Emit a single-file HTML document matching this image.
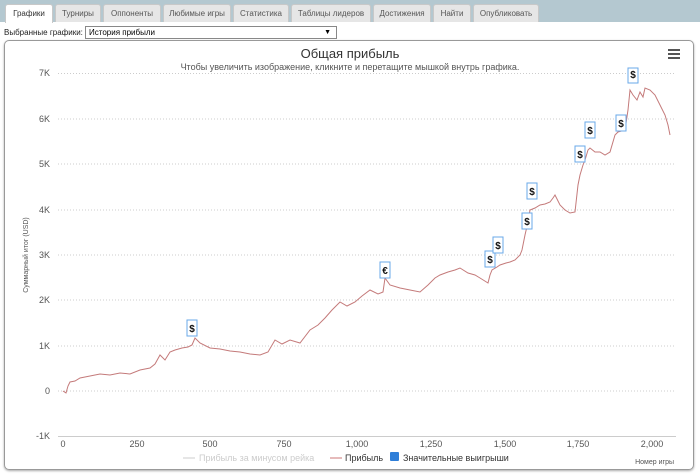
<!DOCTYPE html>
<html><head><meta charset="utf-8"><style>
body{margin:0;width:700px;height:474px;background:#fff;font-family:"Liberation Sans","DejaVu Sans",sans-serif;position:relative;overflow:hidden}
.bar{position:absolute;left:0;top:0;width:700px;height:22px;background:#b4c8d0}
.tab{position:absolute;top:4px;height:18px;background:#e6e6e6;border:1px solid #c8c8c8;border-bottom:none;border-radius:3px 3px 0 0;font-size:8px;color:#555;line-height:17px;text-align:center;box-sizing:border-box}
.tab.a{background:#fff;height:19px;color:#333}
.lbl{position:absolute;left:4px;top:28px;font-size:8px;color:#222}
.sel{position:absolute;left:85px;top:26px;width:247px;height:11px;border:1px solid #888;font-size:8px;line-height:11px;padding-left:3px;box-sizing:content-box}
.sel span{position:absolute;right:5px;top:0;font-size:7px}
.box{position:absolute;left:4px;top:40px;width:690px;height:430px;border:1px solid #999;border-radius:5px;box-sizing:border-box;box-shadow:0 1px 2px #aaa}
svg{position:absolute;left:0;top:0}
</style></head><body>
<div class="bar"></div>
<div class="tab a" style="left:5px;width:48px">Графики</div>
<div class="tab" style="left:55px;width:46px">Турниры</div>
<div class="tab" style="left:103px;width:58px">Оппоненты</div>
<div class="tab" style="left:163px;width:68px">Любимые игры</div>
<div class="tab" style="left:233px;width:56px">Статистика</div>
<div class="tab" style="left:291px;width:80px">Таблицы лидеров</div>
<div class="tab" style="left:373px;width:58px">Достижения</div>
<div class="tab" style="left:433px;width:38px">Найти</div>
<div class="tab" style="left:473px;width:66px">Опубликовать</div>
<div class="lbl">Выбранные графики:</div>
<div class="sel">История прибыли<span>▼</span></div>
<div class="box"></div>
<svg width="700" height="474" font-family="Liberation Sans, sans-serif">
<text x="350" y="58" font-size="13" text-anchor="middle" fill="#333">Общая прибыль</text>
<text x="350" y="70" font-size="9" text-anchor="middle" fill="#555">Чтобы увеличить изображение, кликните и перетащите мышкой внутрь графика.</text>
<g fill="#555"><rect x="668" y="49" width="12" height="2"/><rect x="668" y="53" width="12" height="2"/><rect x="668" y="57" width="12" height="2"/></g>
<g stroke="#ccc" stroke-dasharray="1,2" stroke-width="1">
<line x1="58" x2="676" y1="73.5" y2="73.5"/><line x1="58" x2="676" y1="119" y2="119"/><line x1="58" x2="676" y1="164" y2="164"/><line x1="58" x2="676" y1="210" y2="210"/><line x1="58" x2="676" y1="255" y2="255"/><line x1="58" x2="676" y1="300" y2="300"/><line x1="58" x2="676" y1="346" y2="346"/><line x1="58" x2="676" y1="391" y2="391"/></g>
<line x1="58" x2="676" y1="436.5" y2="436.5" stroke="#ccc"/>
<g font-size="9" fill="#555" text-anchor="end">
<text x="50" y="76">7K</text><text x="50" y="122">6K</text><text x="50" y="167">5K</text><text x="50" y="213">4K</text><text x="50" y="258">3K</text><text x="50" y="303">2K</text><text x="50" y="349">1K</text><text x="50" y="394">0</text><text x="50" y="439">-1K</text></g>
<g font-size="9" fill="#555" text-anchor="middle">
<text x="63" y="447">0</text><text x="137" y="447">250</text><text x="210" y="447">500</text><text x="284" y="447">750</text><text x="357" y="447">1,000</text><text x="431" y="447">1,250</text><text x="505" y="447">1,500</text><text x="578" y="447">1,750</text><text x="652" y="447">2,000</text></g>
<text transform="translate(28,255) rotate(-90)" font-size="7" fill="#555" text-anchor="middle">Суммарный итог (USD)</text>
<text x="674" y="464" font-size="7" fill="#555" text-anchor="end">Номер игры</text>
<line x1="183" x2="195" y1="458" y2="458" stroke="#ccc"/>
<text x="199" y="461" font-size="9" fill="#ccc">Прибыль за минусом рейка</text>
<line x1="330" x2="342" y1="458" y2="458" stroke="#c77"/>
<text x="345" y="461" font-size="9" fill="#333">Прибыль</text>
<rect x="390" y="452" width="9" height="9" rx="1" fill="#2f7ed8"/>
<text x="403" y="461" font-size="9" fill="#333">Значительные выигрыши</text>
<polyline fill="none" stroke="#c47a7a" stroke-width="1" points="63,391 66,393 68,386 70,382 75,381 80,378 90,376 100,374 110,375 120,373 130,374 140,370 150,368 155,364 160,355 165,360 170,352 175,350 182,348 188,347 192,345 195,338 200,343 210,348 220,349 230,351 240,352 250,354 260,355 268,352 275,340 282,344 290,340 300,343 310,330 318,325 325,318 332,310 340,302 347,306 355,302 362,296 370,290 378,294 383,292 385,278 390,285 400,288 410,290 420,292 428,285 435,278 440,275 448,272 455,270 460,268 468,273 475,275 480,278 488,283 490,275 492,270 497,267 500,265 506,263 510,262 515,260 520,255 522,250 525,235 528,222 530,210 535,208 540,205 545,204 550,202 553,198 555,195 560,205 565,210 570,213 575,212 578,185 580,175 583,165 585,160 588,150 590,148 595,152 600,152 605,155 610,152 615,135 618,132 625,130 628,110 630,90 633,95 637,100 640,92 643,97 645,88 650,90 655,95 660,105 665,115 668,125 670,135"/>
<g font-size="10" font-weight="bold" text-anchor="middle" fill="#111">
<g transform="translate(192,320)"><rect x="-5" y="0" width="10" height="16" fill="#fff" stroke="#6aa8e8"/><text y="12">$</text></g>
<g transform="translate(385,262)"><rect x="-5" y="0" width="10" height="16" fill="#fff" stroke="#6aa8e8"/><text y="12">€</text></g>
<g transform="translate(490,251)"><rect x="-5" y="0" width="10" height="16" fill="#fff" stroke="#6aa8e8"/><text y="12">$</text></g>
<g transform="translate(498,237)"><rect x="-5" y="0" width="10" height="16" fill="#fff" stroke="#6aa8e8"/><text y="12">$</text></g>
<g transform="translate(527,213)"><rect x="-5" y="0" width="10" height="16" fill="#fff" stroke="#6aa8e8"/><text y="12">$</text></g>
<g transform="translate(532,183)"><rect x="-5" y="0" width="10" height="16" fill="#fff" stroke="#6aa8e8"/><text y="12">$</text></g>
<g transform="translate(580,146)"><rect x="-5" y="0" width="10" height="16" fill="#fff" stroke="#6aa8e8"/><text y="12">$</text></g>
<g transform="translate(590,122)"><rect x="-5" y="0" width="10" height="16" fill="#fff" stroke="#6aa8e8"/><text y="12">$</text></g>
<g transform="translate(621,115)"><rect x="-5" y="0" width="10" height="16" fill="#fff" stroke="#6aa8e8"/><text y="12">$</text></g>
<g transform="translate(633,68)"><rect x="-5" y="0" width="10" height="15" fill="#fff" stroke="#6aa8e8"/><text y="10">$</text></g>
</g>
</svg>
</body></html>
